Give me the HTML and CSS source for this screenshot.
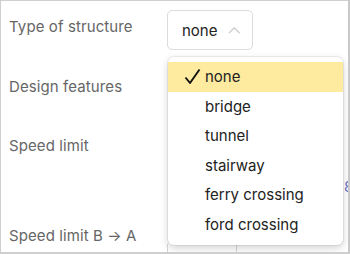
FILE: index.html
```html
<!DOCTYPE html>
<html>
<head>
<meta charset="utf-8">
<link rel="stylesheet" href="styles.css">
</head>
<body>
<div class="frame">
  <div class="form">
    <div class="row row-type">
      <div class="label">Type of structure</div>
      <div class="control">
        <button class="select">
          <span class="select-text">none</span>
          <svg class="chevron" width="14" height="8" viewBox="0 0 14 8"><path d="M1 7.5 L7 1.5 L13 7.5" fill="none" stroke="#c4c4c4" stroke-width="1.2"/></svg>
        </button>
      </div>
    </div>
    <div class="row row-design">
      <div class="label">Design features</div>
      <div class="control"></div>
    </div>
    <div class="row row-speed">
      <div class="label">Speed limit</div>
      <div class="control"><span class="hint">8</span></div>
    </div>
    <div class="row row-speed-ba">
      <div class="label">Speed limit B → A</div>
      <div class="control"><div class="segmented"><span class="seg"></span><span class="seg seg-last"></span></div></div>
    </div>
  </div>

  <ul class="menu">
    <li class="item selected">
      <svg class="check" width="17" height="17" viewBox="0 0 17 17"><path d="M1.5 9.5 L6 15 L15.5 1.5" fill="none" stroke="#111" stroke-width="1.9" stroke-linejoin="round"/></svg>
      none</li>
    <li class="item">bridge</li>
    <li class="item">tunnel</li>
    <li class="item">stairway</li>
    <li class="item">ferry crossing</li>
    <li class="item">ford crossing</li>
  </ul>
</div>
</body>
</html>
```

FILE: styles.css
```css
* { box-sizing: border-box; }
html, body { margin: 0; padding: 0; background: #fff; }
body {
  font-family: "Inter", "Noto Sans", sans-serif;
  overflow: hidden;
}
.frame {
  position: relative;
  width: 350px;
  height: 254px;
  border: 1px solid #cfcfcf;
  border-right: 2px solid #c9c9c9;
  border-bottom: 2px solid #cfcfcf;
  overflow: hidden;
}
.form {
  display: flex;
  flex-direction: column;
}
.row {
  display: grid;
  grid-template-columns: 166px 1fr;
  align-items: start;
}
.label {
  padding-left: 8px;
  padding-top: 16px;
  font-size: 15px;
  line-height: 20px;
  color: #666;
  letter-spacing: 0.1px;
}
.row-type { height: 60px; padding-top: 9px; }
.row-type .label { padding-top: 7px; }
.row-design { height: 59px; }
.row-speed { height: 90px; }
.row-speed-ba { height: 44px; }
.control { position: relative; height: 100%; }
.select {
  display: flex;
  align-items: center;
  gap: 11px;
  width: 86px;
  height: 40px;
  padding: 0 11px 0 14px;
  border: 1px solid #dcdcdc;
  border-radius: 5px;
  background: #fff;
  font-family: inherit;
  font-size: 15px;
  color: #222;
}
.chevron { margin-top: -1px; }
.hint {
  position: absolute;
  left: 177px;
  top: 57px;
  line-height: 20px;
  color: #6f78c8;
  font-size: 15px;
}
.segmented {
  display: flex;
  height: 14px;
  margin-top: 34px;
  border-left: 1px solid #d6d6d6;
}
.seg { width: 69px; border-right: 1px solid #d6d6d6; }
.seg-last { border-right: none; }

.menu {
  position: absolute;
  left: 167px;
  top: 56px;
  width: 175px;
  height: 188px;
  margin: 0;
  padding: 5px 0;
  list-style: none;
  background: #fff;
  border-radius: 6px;
  box-shadow: 0 0 0 1px rgba(0,0,0,0.06), 0 3px 8px rgba(0,0,0,0.18);
}
.item {
  position: relative;
  height: 29.6px;
  line-height: 29.6px;
  padding-left: 37px;
  font-size: 15px;
  color: #222;
}
.item.selected { background: #feeba0; }
.check {
  position: absolute;
  left: 16px;
  top: 6px;
}
```
